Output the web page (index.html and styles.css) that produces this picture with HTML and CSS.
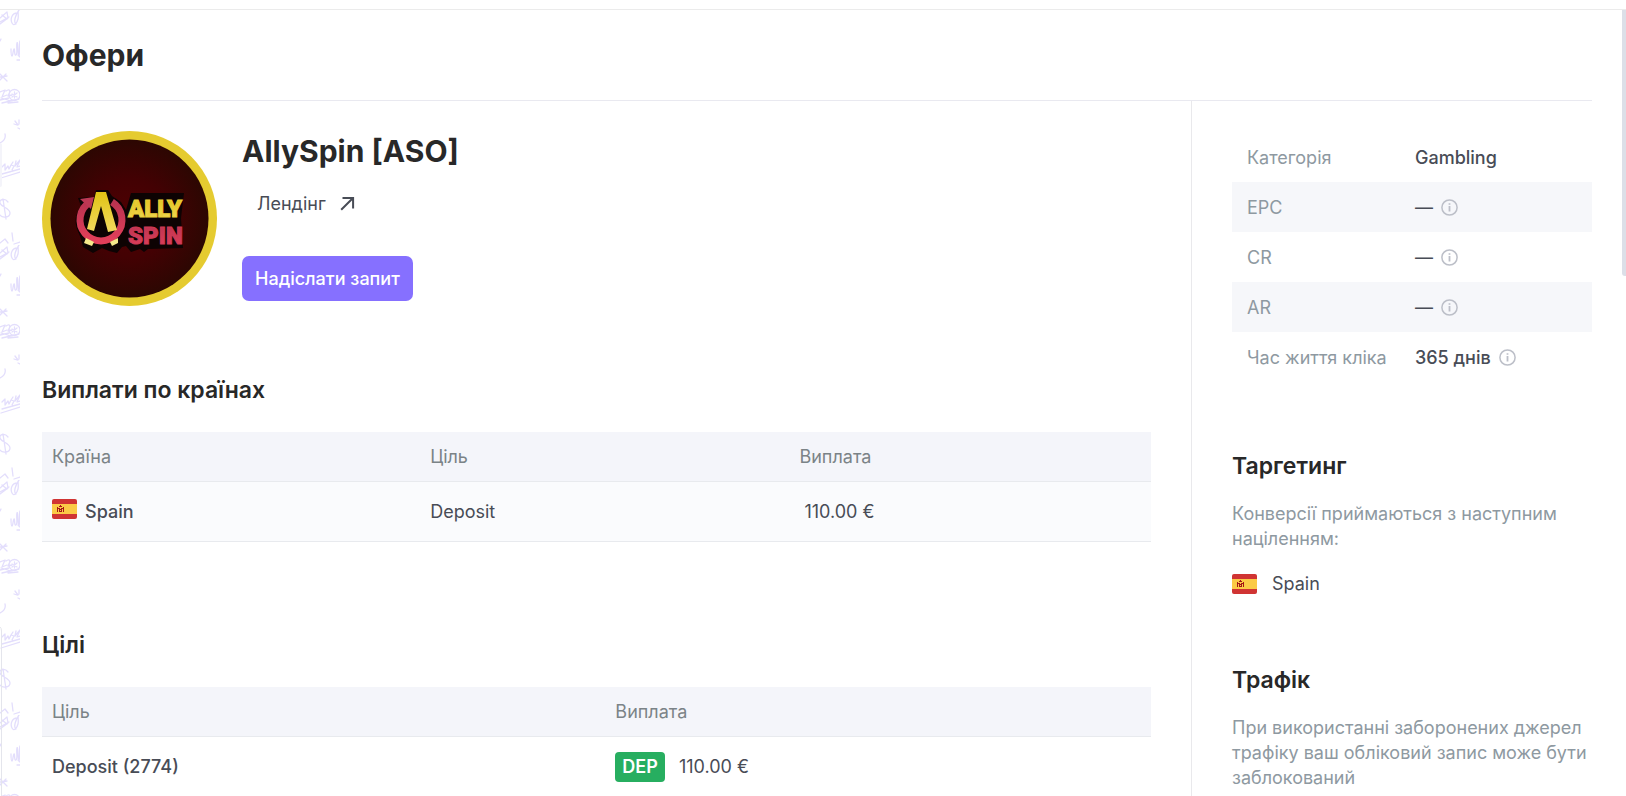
FILE: index.html
```html
<!DOCTYPE html>
<html lang="uk">
<head>
<meta charset="utf-8">
<title>Офери</title>
<link rel="stylesheet" href="styles.css">
</head>
<body>
<svg class="defs" aria-hidden="true">
  <symbol id="flag-es" viewBox="0 0 25 20">
    <clipPath id="flag-clip"><rect width="25" height="20" rx="2"/></clipPath>
    <g clip-path="url(#flag-clip)">
      <path fill="#d03433" d="M0 0h25v20H0z"/>
      <path fill="#fbca46" d="M0 5h25v10H0z"/>
      <path fill="#a41517" d="M5 8h1v5H5zM11 8h1v5h-1zM7 7h3v1H7zM8 6h1v1H8zM6 9h1v1H6zM10 9h1v1h-1zM7 9h1v3H7zM9 9h1v3H9zM7 12h3v1H7zM8 10h1v1H8z"/>
    </g>
  </symbol>
  <symbol id="info" viewBox="0 0 17 17">
    <circle cx="8.5" cy="8.5" r="7.6" fill="none" stroke="#bcbfc8" stroke-width="1.5"/>
    <path fill="#bcbfc8" d="M7.600 4.200h1.800v1.600H7.600zM7.600 7.100h1.800v5.400H7.600z"/>
  </symbol>
</svg>
<header class="topbar"></header>
<div class="shell">
  <aside class="strip" aria-hidden="true">
    <svg class="strip-art" width="20" height="786">
      <defs>
        <pattern id="doodles" width="20" height="235" patternUnits="userSpaceOnUse">
          <g fill="none" stroke="#e3defc" stroke-width="1.3" stroke-linecap="round" stroke-linejoin="round">
            <path d="M0 8 7 2 8 8 0 14M2 5l5 4M0 12l9-5M19 0c-3 4-6 12-3 14M17 3c-5 0-7 6-5 10s5 0 6-4-1-8 1-9"/>
            <path d="M11 39c0 5 0 7 1 7s1-6 2-7 0 7 2 6 0-9 1-12 1 14 2 13 0-14 1-15M17 50h3M18 45l2 2"/>
            <path d="M0 31 1 29M0 64l7 7M6 64 0 70M0 67l7-1"/>
            <path d="M0 82l5-2-3 7 5-2M6 81c4-3 5 0 2 5l4-1M0 90l9-2M2 93l17-4M1 88l10 3M8 93l10-1"/>
            <circle cx="14.500" cy="85" r="5.500"/>
            <path d="M14.500 82v6M12 84l5 3M17 83l-5 4"/>
            <path d="M14 114l3 1M15 111l3 4M19 110v4M18 118l2 1"/>
            <path d="M5 124c1 4-1 7-5 9"/>
            <path d="M2 157l3-3v6l3-4 1 3 2-4M13 152l-2 3 3 1-2 4M16 151l-1 5 5-6-3 7 3-1M2 164l18-5M1 168l19-6"/>
            <path d="M8 192c-3-4-9-3-8 1s10 5 10 10-8 5-10 2M3 189l3 20"/>
            <path d="M0 233 5 229l3 4M12 223l1 8M14 234l6-2"/>
          </g>
        </pattern>
      </defs>
      <rect width="20" height="786" fill="url(#doodles)"/>
      <rect x="-8" y="133" width="10" height="44" rx="2" fill="#f4f4fa"/>
      <path d="M0 617q1.500 1 1.500 4v165" fill="none" stroke="#e4e5ec"/>
    </svg>
  </aside>
  <div class="page">
    <div class="page-head"><h1 class="title">Офери</h1></div>
    <div class="columns">
      <main class="main">
        <section class="offer">
          <svg class="logo" viewBox="0 0 175 175" role="img" aria-label="AllySpin">
            <defs>
              <radialGradient id="wine"><stop offset="0" stop-color="#500003"/><stop offset=".5" stop-color="#430103"/><stop offset="1" stop-color="#2c0702"/></radialGradient>
              <linearGradient id="gold" x2="0" y2="1"><stop offset="0" stop-color="#e0c314"/><stop offset="1" stop-color="#f2d95e"/></linearGradient>
              <linearGradient id="rose" x2="0" y2="1"><stop offset="0" stop-color="#b93350"/><stop offset="1" stop-color="#e23f5a"/></linearGradient>
            </defs>
            <circle cx="87.500" cy="87.500" r="87.500" fill="#e5cb30"/>
            <circle cx="87.500" cy="87.500" r="79" fill="url(#wine)"/>
            <path fill="#0d0303" d="M36 67 52 66 54 59h12l4 6 9 6 5 8 5-17h53l-3 25 2 30-35 1-4 3-4-3-9 3-5-6-4 1-5 6-8-2-7-3-9 5-10-6-3-11c-7-14-5-21 1-30z"/>
            <path d="M48 71A21 21 0 1 0 70 71" fill="none" stroke="url(#rose)" stroke-width="7"/>
            <path fill="#bd3854" d="m38 68 14-2-3 12z"/>
            <path fill="url(#gold)" d="M54 61h10l11 38-9 2-7-26-7 25-7-2z"/>
            <path fill="#f4e98b" d="m44 107 8 4-2 4-8-3zM76 107l-8 4 2 4 6-3z"/>
            <g class="logo-text">
              <text x="86" y="86" fill="url(#gold)" stroke="#e9cd38">ALLY</text>
              <text x="86" y="113" fill="url(#rose)" stroke="#cd3a55">SPIN</text>
            </g>
          </svg>
          <div class="offer-info">
            <h2 class="offer-name">AllySpin [ASO]</h2>
            <a class="landing" href="#landing">Лендінг
              <svg class="arrow" viewBox="0 0 15 15" aria-hidden="true"><path d="M2.500 1.900h10.600v10.600M13 2 1.200 13.800"/></svg>
            </a>
            <button class="request" type="button">Надіслати запит</button>
          </div>
        </section>
        <section class="payouts">
          <h3 class="heading">Виплати по країнах</h3>
          <table class="table">
            <thead><tr><th class="col-country">Країна</th><th class="col-goal">Ціль</th><th>Виплата</th></tr></thead>
            <tbody><tr class="tinted"><td class="strong"><span class="country"><svg class="flag" aria-hidden="true"><use href="#flag-es"/></svg>Spain</span></td><td>Deposit</td><td><span class="sum">110.00 €</span></td></tr></tbody>
          </table>
        </section>
        <section class="goals">
          <h3 class="heading">Цілі</h3>
          <table class="table">
            <thead><tr><th class="col-half">Ціль</th><th>Виплата</th></tr></thead>
            <tbody><tr><td class="strong">Deposit (2774)</td><td><span class="payout"><span class="badge">DEP</span>110.00 €</span></td></tr></tbody>
          </table>
        </section>
      </main>
      <aside class="side">
        <table class="facts">
          <tbody>
            <tr><th scope="row">Категорія</th><td>Gambling</td></tr>
            <tr><th scope="row">EPC</th><td><span class="fact empty">—<svg class="info"><use href="#info"/></svg></span></td></tr>
            <tr><th scope="row">CR</th><td><span class="fact empty">—<svg class="info"><use href="#info"/></svg></span></td></tr>
            <tr><th scope="row">AR</th><td><span class="fact empty">—<svg class="info"><use href="#info"/></svg></span></td></tr>
            <tr><th scope="row">Час життя кліка</th><td><span class="fact">365 днів<svg class="info"><use href="#info"/></svg></span></td></tr>
          </tbody>
        </table>
        <section class="block">
          <h3 class="side-heading">Таргетинг</h3>
          <p class="note">Конверсії приймаються з наступним націленням:</p>
          <div class="target"><svg class="flag" aria-hidden="true"><use href="#flag-es"/></svg>Spain</div>
        </section>
        <section class="block">
          <h3 class="side-heading">Трафік</h3>
          <p class="note">При використанні заборонених джерел трафіку ваш обліковий запис може бути заблокований</p>
        </section>
      </aside>
    </div>
  </div>
  <div class="scroll-thumb"></div>
</div>
</body>
</html>
```
FILE: styles.css
```css
* { box-sizing: border-box; }
body {
  margin: 0;
  height: 100vh;
  overflow: hidden;
  display: flex;
  flex-direction: column;
  background: #fff;
  color: #484c56;
  font: 400 18px/25px Inter, "Noto Sans", sans-serif;
}
h1, h2, h3, p { margin: 0; }
.defs { position: absolute; width: 0; height: 0; }
.topbar { flex: none; height: 10px; border-bottom: 1px solid #ebebeb; }
.shell { position: relative; flex: 1; min-height: 0; display: flex; overflow: hidden; }
.strip { flex: none; width: 20px; overflow: hidden; }
.strip-art { display: block; }
.page { flex: 1; min-width: 0; padding: 0 34px 0 22px; }
.scroll-thumb {
  position: absolute; top: 0; right: 0;
  width: 4px; height: 266px;
  border-radius: 0 0 0 3px;
  background: #dcdfe8;
}
.page-head { padding: 25px 0; border-bottom: 1px solid #e9e9f0; }
.title, .offer-name { color: #282828; font-size: 30px; line-height: 40px; font-weight: 700; }
.columns { display: flex; }
.main { flex: 1; min-width: 0; padding: 30px 40px 30px 0; }
.side { flex: none; width: 401px; padding: 31px 0 30px 40px; border-left: 1px solid #e9e9ec; }

.offer { display: flex; gap: 25px; }
.logo { flex: none; width: 175px; height: 175px; }
.logo-text { font: 900 24px Roboto, sans-serif; stroke-width: 1px; }
.offer-info { display: flex; flex-direction: column; align-items: flex-start; }
.landing {
  display: flex; align-items: center; gap: 14px;
  height: 45px; margin: 10px 0 30px; padding: 0 15px;
  color: #484c56; text-decoration: none;
}
.arrow { width: 15px; height: 15px; fill: none; stroke: #484c56; stroke-width: 2; }
.request {
  height: 45px; padding: 0 13px;
  border: 0; border-radius: 7px;
  background: #8670ff; color: #fff;
  font: inherit; font-weight: 500;
}

.heading, .side-heading { color: #282828; font-size: 23px; line-height: 30px; font-weight: 600; }
.heading { margin-bottom: 27px; }
.payouts { margin-top: 69px; }
.goals { margin-top: 88px; }
.table { width: 100%; border-collapse: separate; border-spacing: 0; table-layout: fixed; }
.table th, .table td { padding: 0 10px; text-align: left; border-bottom: 1px solid #e8eaee; }
.table th { height: 50px; background: #f4f5fa; color: #7b8387; font-weight: 400; }
.table td { height: 60px; }
.tinted { background: #fafbfd; }
.table .strong { font-weight: 500; }
.col-country { width: 34.1%; }
.col-goal { width: 33.3%; }
.col-half { width: 50.8%; }
.country { display: flex; align-items: flex-start; gap: 8px; }
.flag { flex: none; width: 25px; height: 20px; }
.sum { padding-left: 5px; }
.payout { display: flex; align-items: center; gap: 14px; }
.badge {
  padding: 0 7px; border-radius: 4px;
  background: #27ae60; color: #fff;
  line-height: 30px; font-weight: 600;
}

.facts { width: 100%; border-collapse: separate; border-spacing: 0; table-layout: fixed; }
.facts th, .facts td { height: 50px; padding: 0 0 0 15px; text-align: left; }
.facts th { width: 168px; color: #8e99a1; font-weight: 400; white-space: nowrap; }
.facts td { font-weight: 500; }
.facts tr:nth-child(even) { background: #f6f7fa; }
.fact { display: flex; align-items: center; gap: 8px; }
.empty { font-weight: 400; }
.info { width: 17px; height: 17px; }
.block { margin-top: 69px; }
.note { margin-top: 20px; color: #8e99a1; }
.target { display: flex; align-items: center; gap: 15px; margin-top: 20px; }
```
